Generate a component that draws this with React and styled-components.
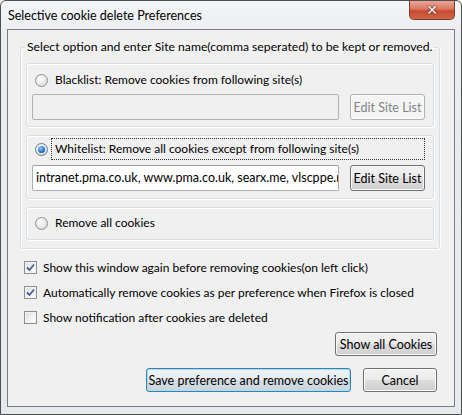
import React from 'react';
import styled, { createGlobalStyle, css } from 'styled-components';

const Global = createGlobalStyle`
  html, body { margin: 0; padding: 0; background: #ffffff; }
  body { font-family: Lato, "Noto Sans", sans-serif; font-size: 12px; color: #000; }
`;

const Window = styled.div`
  width: 462px;
  height: 415px;
  box-sizing: border-box;
  border: 1px solid #4d4d4d;
  border-radius: 6px 6px 0 0;
  background: linear-gradient(to bottom, #f4f5f7 0%, #e9ecf0 40px, #e6e9ed 100%);
  display: flex;
  flex-direction: column;
  overflow: hidden;
`;

const TitleBar = styled.div`
  height: 28px;
  display: flex;
  align-items: flex-start;
  padding-left: 7px;
  flex-shrink: 0;
`;

const Title = styled.span`
  line-height: 29px;
  font-size: 12.5px;
  color: #000;
`;

const CloseButton = styled.div`
  margin-left: auto;
  margin-right: 6px;
  width: 46px;
  height: 19px;
  box-sizing: border-box;
  border: 1px solid #7c3a2e;
  border-top: none;
  border-radius: 0 0 5px 5px;
  background: linear-gradient(to bottom, #e9a898 0%, #d9765f 45%, #c74a2f 55%, #d0664b 100%);
  display: flex;
  align-items: center;
  justify-content: center;
  color: #fff;
  font-family: "DejaVu Sans", sans-serif;
  font-weight: bold;
  font-size: 14px;
  text-shadow: 0 0 2px #4a1a12, 0 0 1px #4a1a12;
`;

const Content = styled.div`
  flex: 1;
  min-height: 0;
  margin: 0 6px 7px 6px;
  border: 1px solid #7d7d7d;
  background: #f0f0f0;
  padding: 10px 14px 0 12px;
  display: flex;
  flex-direction: column;
`;

const GroupFrame = styled.fieldset`
  margin: 0;
  min-width: 0;
  padding: 9px 5px 8px 5px;
  border: 1px solid #d5dfe5;
  border-radius: 3px;
  box-shadow: inset 1px 1px 0 #ffffff, 1px 1px 0 #ffffff;
  display: flex;
  flex-direction: column;
  gap: 8px;
`;

const Legend = styled.legend`
  padding: 0 2px;
  margin-left: -1px;
  line-height: 14px;
  font-size: 12.2px;
  white-space: nowrap;
`;

const OptionBox = styled.div`
  height: ${p => p.$h}px;
  box-sizing: border-box;
  border: 1px solid #d5dfe5;
  border-radius: 3px;
  box-shadow: inset 1px 1px 0 #ffffff, 1px 1px 0 #ffffff;
  padding: ${p => p.$top}px 8px 0 5px;
  display: flex;
  flex-direction: column;
  gap: ${p => p.$gap || 0}px;
`;

const RadioRow = styled.label`
  display: flex;
  align-items: center;
  gap: 3px;
  padding-left: 3px;
  height: 22px;
  flex-shrink: 0;
`;

const RadioDot = styled.span`
  width: 13px;
  height: 13px;
  box-sizing: border-box;
  border-radius: 50%;
  border: 1px solid #8f8f8f;
  background: radial-gradient(circle at 40% 35%, #ffffff 0%, #e4e4e4 60%, #cfcfcf 100%);
  display: flex;
  align-items: center;
  justify-content: center;
  flex-shrink: 0;
  ${p => p.$checked && css`
    border-color: #5c7aa0;
    &::after {
      content: '';
      width: 7px;
      height: 7px;
      border-radius: 50%;
      background: radial-gradient(circle at 40% 35%, #8fd0f5 0%, #1f6dc0 60%, #0e3f7c 100%);
    }
  `}
`;

const RadioText = styled.span`
  flex: 1;
  line-height: 20px;
  padding: 0 3px;
  white-space: nowrap;
  border: 1px dotted ${p => (p.$focused ? '#333' : 'transparent')};
`;

const FieldRow = styled.div`
  display: flex;
  align-items: center;
  gap: 11px;
`;

const SiteInput = styled.div`
  width: 307px;
  height: 26px;
  flex-shrink: 0;
  box-sizing: border-box;
  border: 1px solid ${p => (p.$disabled ? '#adb2b5' : '#abadb3')};
  border-top-color: ${p => (p.$disabled ? '#adb2b5' : '#9a9ea5')};
  border-radius: 2px;
  background: ${p => (p.$disabled ? '#f0f0f0' : '#ffffff')};
  padding: 0 3px;
  line-height: 24px;
  font-size: 12.5px;
  white-space: nowrap;
  overflow: hidden;
`;

const Button = styled.div`
  height: ${p => p.$h || 26}px;
  width: ${p => p.$w}px;
  flex-shrink: 0;
  box-sizing: border-box;
  border: 1px solid #707070;
  border-radius: 3px;
  background: linear-gradient(to bottom, #f2f2f2 0%, #ebebeb 48%, #dddddd 52%, #cfcfcf 100%);
  box-shadow: inset 0 0 0 1px #fbfbfb;
  display: flex;
  align-items: center;
  justify-content: center;
  white-space: nowrap;
  font-size: 12.5px;
  ${p => p.$disabled && css`
    border-color: #adb2b5;
    background: #f4f4f4;
    color: #838383;
  `}
  ${p => p.$default && css`
    border-color: #3c7fb1;
    box-shadow: inset 0 0 0 1px #a8def5;
    background: linear-gradient(to bottom, #eef3f6 0%, #e6ecf0 48%, #d6dfe5 52%, #c9d5dc 100%);
  `}
`;

const CheckList = styled.div`
  display: flex;
  flex-direction: column;
  gap: 12px;
  margin-top: 12px;
  padding-left: 4px;
`;

const CheckRow = styled.label`
  display: flex;
  align-items: center;
  gap: 6px;
  height: 13px;
  white-space: nowrap;
`;

const Box = styled.span`
  width: 13px;
  height: 13px;
  box-sizing: border-box;
  border: 1px solid #8e8f8f;
  background: linear-gradient(135deg, #dcdcdc 0%, #f4f4f4 60%, #ffffff 100%);
  box-shadow: inset 0 0 0 1px #f4f4f4;
  display: flex;
  align-items: center;
  justify-content: center;
  flex-shrink: 0;
`;

const Actions = styled.div`
  display: flex;
  flex-direction: column;
  align-items: flex-end;
  gap: 12px;
  margin-top: 8px;
  margin-right: 3px;
`;

const ButtonRow = styled.div`
  display: flex;
  gap: 12px;
`;

const Radio = ({ checked, focused, children }) => (
  <RadioRow>
    <RadioDot $checked={checked} />
    <RadioText $focused={focused}>{children}</RadioText>
  </RadioRow>
);

const Check = ({ checked, children }) => (
  <CheckRow>
    <Box>
      {checked && (
        <svg width="9" height="9" viewBox="0 0 9 9">
          <path d="M1 4.5 L3.5 7 L8 1.5" fill="none" stroke="#4a5f97" strokeWidth="1.8" />
        </svg>
      )}
    </Box>
    <span>{children}</span>
  </CheckRow>
);

export default function App() {
  return (
    <>
      <Global />
      <Window>
        <TitleBar>
          <Title>Selective cookie delete Preferences</Title>
          <CloseButton>✕</CloseButton>
        </TitleBar>
        <Content>
          <GroupFrame>
            <Legend>Select option and enter Site name(comma seperated) to be kept or removed.</Legend>
            <OptionBox $h={64} $top={5} $gap={3}>
              <Radio>Blacklist: Remove cookies from following site(s)</Radio>
              <FieldRow>
                <SiteInput $disabled />
                <Button $w={75} $disabled>Edit Site List</Button>
              </FieldRow>
            </OptionBox>
            <OptionBox $h={64} $top={2} $gap={5}>
              <Radio checked focused>Whitelist: Remove all cookies except from following site(s)</Radio>
              <FieldRow>
                <SiteInput>intranet.pma.co.uk, www.pma.co.uk, searx.me, vlscppe.microsoft.com</SiteInput>
                <Button $w={75}>Edit Site List</Button>
              </FieldRow>
            </OptionBox>
            <OptionBox $h={33} $top={4}>
              <Radio>Remove all cookies</Radio>
            </OptionBox>
          </GroupFrame>
          <CheckList>
            <Check checked>Show this window again before removing cookies(on left click)</Check>
            <Check checked>Automatically remove cookies as per preference when Firefox is closed</Check>
            <Check>Show notification after cookies are deleted</Check>
          </CheckList>
          <Actions>
            <Button $w={102} $h={24}>Show all Cookies</Button>
            <ButtonRow>
              <Button $w={205} $h={24} $default>Save preference and remove cookies</Button>
              <Button $w={74} $h={24}>Cancel</Button>
            </ButtonRow>
          </Actions>
        </Content>
      </Window>
    </>
  );
}
